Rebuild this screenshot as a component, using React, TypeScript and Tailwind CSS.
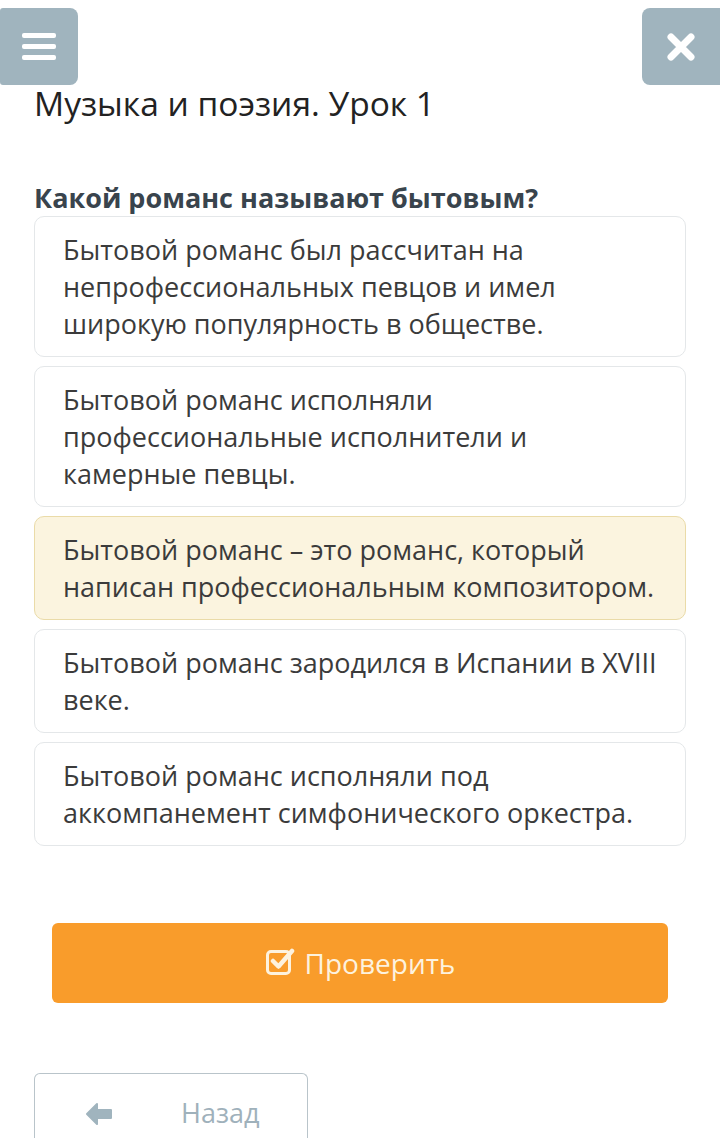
import React from "react";

const options = [
  { text: "Бытовой романс был рассчитан на непрофессиональных певцов и имел широкую популярность в обществе.", sel: false },
  { text: "Бытовой романс исполняли профессиональные исполнители и камерные певцы.", sel: false },
  { text: "Бытовой романс – это романс, который написан профессиональным композитором.", sel: true },
  { text: "Бытовой романс зародился в Испании в XVIII веке.", sel: false },
  { text: "Бытовой романс исполняли под аккомпанемент симфонического оркестра.", sel: false },
];

export default function App() {
  return (
    <div className="w-[720px] h-[1138px] overflow-hidden bg-white relative" style={{ fontFamily: '"Open Sans", "Noto Sans", sans-serif' }}>
      <div className="flex justify-between pt-[8px]">
        <div className="w-[78px] h-[77px] bg-[#a0b4be] rounded-r-[8px] rounded-l-[3px] flex flex-col items-center justify-center gap-[6px]">
          <div className="w-[34px] h-[5px] bg-white rounded-[2px]" />
          <div className="w-[34px] h-[5px] bg-white rounded-[2px]" />
          <div className="w-[34px] h-[5px] bg-white rounded-[2px]" />
        </div>
        <div className="w-[78px] h-[77px] bg-[#a0b4be] rounded-l-[8px] flex items-center justify-center">
          <svg width="30" height="30" viewBox="0 0 30 30">
            <path d="M5 5 L25 25 M25 5 L5 25" stroke="white" strokeWidth="7" strokeLinecap="round" />
          </svg>
        </div>
      </div>
      <div className="px-[34px]">
        <h1 className="text-[33.5px] leading-[40px] text-[#222] mt-[-2px]">Музыка и поэзия. Урок 1</h1>
        <h2 className="mt-[59px] text-[27px] leading-[32px] font-bold text-[#39444d]">Какой романс называют бытовым?</h2>
        <div className="flex flex-col gap-[9px] mt-[2px]">
          {options.map((o, i) => (
            <div
              key={i}
              className={
                "rounded-[10px] border px-[28px] py-[14px] text-[27px] leading-[37px] text-[#3b3b3b] " +
                (o.sel ? "bg-[#fbf4df] border-[#eadba8]" : "bg-white border-[#e4e7e9]")
              }
            >
              {o.text}
            </div>
          ))}
        </div>
        <div className="px-[18px] mt-[77px]">
          <div className="h-[80px] bg-[#f99c2b] rounded-[6px] flex items-center justify-center gap-[10px] text-[28px] text-[#fdf2de]">
            <svg width="30" height="30" viewBox="0 0 30 30" className="mt-[-4px]">
              <rect x="2.5" y="5.5" width="22" height="22" rx="3.5" fill="none" stroke="#fdf2de" strokeWidth="3" />
              <path d="M8 15 L13.5 20.5 L27 5" fill="none" stroke="#fdf2de" strokeWidth="4.5" strokeLinecap="round" strokeLinejoin="round" />
            </svg>
            <span>Проверить</span>
          </div>
        </div>
        <div className="mt-[70px] w-[274px] h-[80px] border border-[#b9c4ca] rounded-t-[6px] border-b-0 flex items-center text-[27px] text-[#9fb1bb]">
          <svg width="28" height="24" viewBox="0 0 28 24" className="ml-[50px]">
            <path d="M12 2 L2 12 L12 22 L12 16 L26 16 L26 8 L12 8 Z" fill="#a0b4be" stroke="#a0b4be" strokeWidth="2" strokeLinejoin="round" />
          </svg>
          <span className="ml-[68px]">Назад</span>
        </div>
      </div>
    </div>
  );
}
